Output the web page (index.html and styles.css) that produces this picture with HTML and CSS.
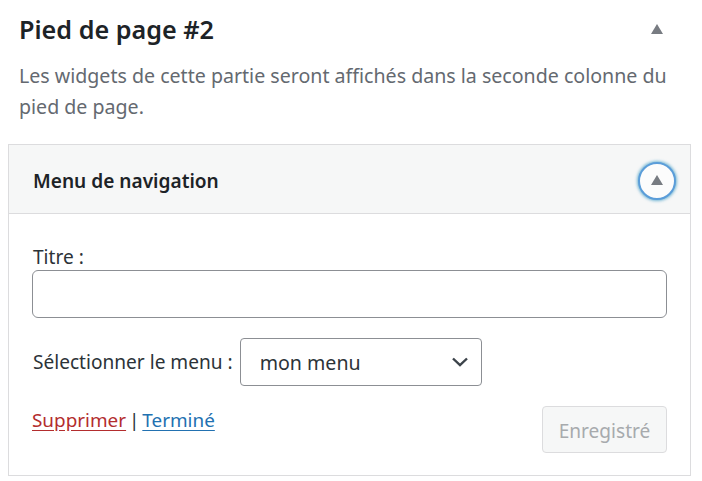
FILE: index.html
```html
<!DOCTYPE html>
<html lang="fr">
<head>
<meta charset="utf-8">
<link rel="stylesheet" href="styles.css">
</head>
<body>
<div class="area">
  <div class="area-head">
    <h2 class="area-title">Pied de page #2</h2>
    <span class="tri"></span>
  </div>
  <p class="area-desc">Les widgets de cette partie seront affichés dans la seconde colonne du pied de page.</p>
  <div class="widget">
    <div class="widget-head">
      <h3 class="widget-title">Menu de navigation</h3>
      <button class="toggle"><span class="tri"></span></button>
    </div>
    <div class="widget-body">
      <label class="lbl">Titre :</label>
      <div class="input"></div>
      <div class="sel-row">
        <span class="lbl">Sélectionner le menu :</span>
        <div class="select">
          <span>mon menu</span>
          <svg class="chev" width="18" height="10" viewBox="0 0 18 10"><path d="M2 1.5 L9 8.2 L16 1.5" fill="none" stroke="#3c434a" stroke-width="2.4"/></svg>
        </div>
      </div>
      <div class="actions">
        <div class="links"><a class="del">Supprimer</a> | <a class="done">Terminé</a></div>
        <button class="save">Enregistré</button>
      </div>
    </div>
  </div>
</div>
</body>
</html>
```
FILE: styles.css
```css
* { box-sizing: border-box; }
body { margin: 0; background: #fff; font-family: "Noto Sans", sans-serif; color: #1d2327; }
.area-head { display: flex; align-items: center; justify-content: space-between; padding: 12px 39px 0 19px; }
.area-title { margin: 0; font-size: 25.2px; line-height: 34px; font-weight: 600; color: #1d2327; }
.tri { display: block; width: 0; height: 0; border-left: 6.5px solid transparent; border-right: 6.5px solid transparent; border-bottom: 10px solid #787c82; }
.area-desc { margin: 14px 20px 0 19px; font-size: 19.6px; line-height: 31px; color: #646970; }
.widget { margin: 22px 11px 0 8px; border: 1px solid #dcdcde; }
.widget-head { display: flex; align-items: center; justify-content: space-between; background: #f6f7f7; height: 69px; border-bottom: 1px solid #dcdcde; padding: 4px 14px 0 24px; }
.widget-title { margin: 0; font-size: 19.1px; line-height: 26px; font-weight: 600; color: #1d2327; }
.toggle { width: 38px; height: 38px; border-radius: 50%; border: 2px solid #5b9dd9; background: #fcfcfc; box-shadow: 0 0 3px 1px rgba(30, 140, 190, 0.6); display: flex; align-items: center; justify-content: center; padding: 0 0 3px 0; margin-top: 0; }
.widget-body { padding: 30px 23px 22px 23px; }
.lbl { font-size: 19.1px; color: #2c3338; display: block; line-height: 26px; padding-left: 1px; }
.input { margin-top: 0; height: 48px; border: 1px solid #8c8f94; border-radius: 6px; }
.sel-row { display: flex; align-items: center; gap: 7px; margin-top: 20px; }
.select { width: 242px; height: 48px; border: 1px solid #8c8f94; border-radius: 4px; display: flex; align-items: center; justify-content: space-between; padding: 0 12px 0 19px; font-size: 19.6px; color: #2c3338; }
.chev { display: block; }
.actions { display: flex; justify-content: space-between; align-items: flex-start; margin-top: 20px; }
.links { font-size: 18.9px; line-height: 26px; color: #2c3338; padding-top: 1px; word-spacing: -2px; }
.del { color: #b32d2e; text-decoration: underline; text-underline-offset: 3px; }
.done { color: #2271b1; text-decoration: underline; text-underline-offset: 3px; }
.save { width: 125px; height: 47px; background: #f6f7f7; border: 1px solid #dcdcde; border-radius: 4px; color: #a7aaad; font-family: inherit; font-size: 19.1px; padding: 3px 0 0 0; }
```
